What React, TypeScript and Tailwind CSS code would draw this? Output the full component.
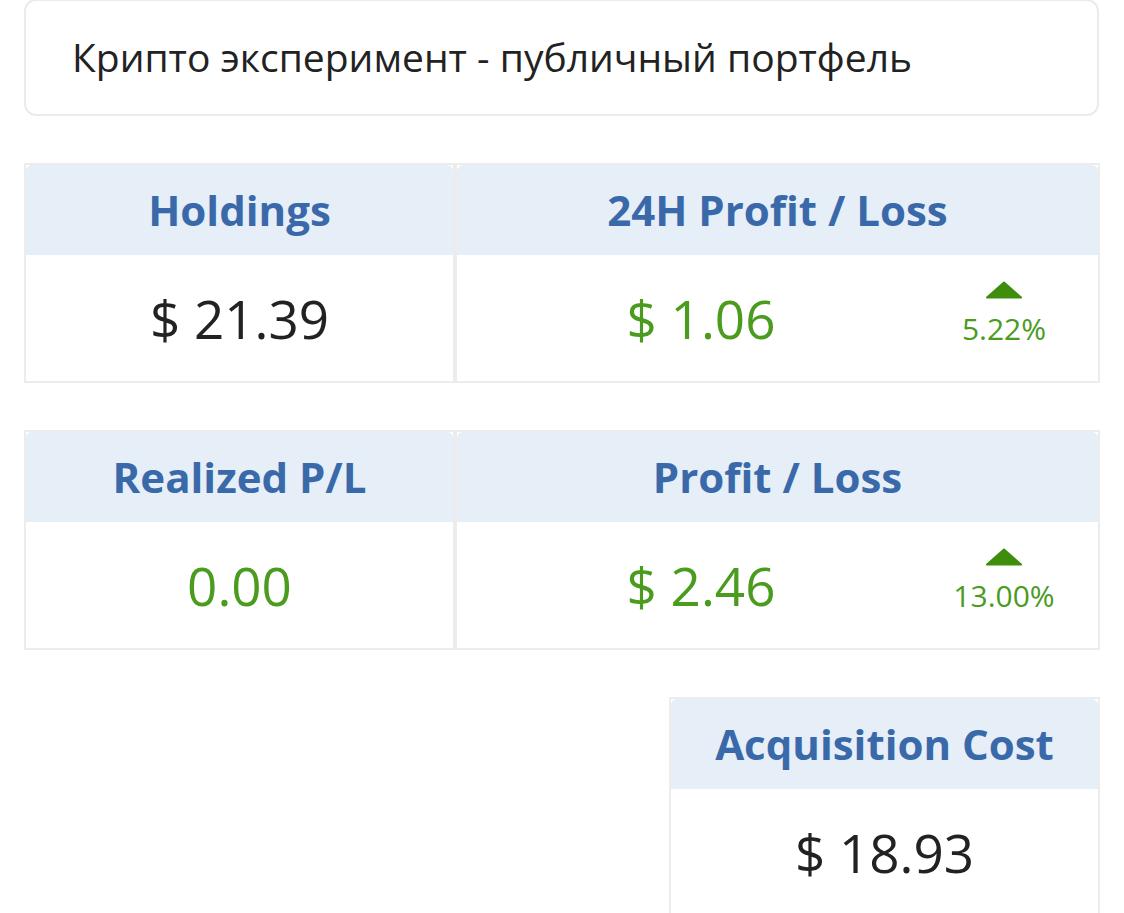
import React from 'react'

const font = { fontFamily: '"Open Sans", "Liberation Sans", sans-serif' }

function Header({ title }: { title: string }) {
  return (
    <div className="h-[90px] bg-[#e6eef7] rounded-t-[6px] flex items-center justify-center">
      <span className="text-[42px] font-bold text-[#3a69aa] leading-none">{title}</span>
    </div>
  )
}

function Triangle() {
  return (
    <svg width="38" height="18" viewBox="0 0 38 18" className="block">
      <path d="M19 1.5 L36 16.5 L2 16.5 Z" fill="#3e8e0c" stroke="#3e8e0c" strokeWidth="2" strokeLinejoin="round" />
    </svg>
  )
}

function PlainCell({ title, value, green }: { title: string; value: string; green?: boolean }) {
  return (
    <div className="w-[431px] shrink-0 border-2 border-[#ececec] bg-white">
      <Header title={title} />
      <div className="h-[126px] flex items-center justify-center">
        <span className={`text-[53px] leading-none ${green ? 'text-[#4a9b1e]' : 'text-[#222222]'}`}>{value}</span>
      </div>
    </div>
  )
}

function ChangeCell({ title, value, pct }: { title: string; value: string; pct: string }) {
  return (
    <div className="flex-1 border-2 border-[#ececec] bg-white">
      <Header title={title} />
      <div className="h-[126px] flex items-center">
        <div className="w-[488px] flex justify-center">
          <span className="text-[53px] leading-none text-[#4a9b1e]">{value}</span>
        </div>
        <div className="w-[118px] self-start mt-[26px] flex flex-col items-center">
          <Triangle />
          <span className="text-[30px] leading-none text-[#4a9b1e] mt-[15px]">{pct}</span>
        </div>
      </div>
    </div>
  )
}

export default function App() {
  return (
    <div className="w-[1124px] h-[913px] overflow-hidden bg-white px-[24px]" style={font}>
      {/* Название портфеля */}
      <div className="h-[117px] -mt-[1px] mr-[1px] border-2 border-[#ebebeb] rounded-[12px] flex items-center pl-[46px]">
        <span className="text-[39px] text-[#222222] leading-none pb-[2px]">Крипто эксперимент - публичный портфель</span>
      </div>

      <div className="flex mt-[47px]">
        <PlainCell title="Holdings" value="$ 21.39" />
        <ChangeCell title="24H Profit / Loss" value="$ 1.06" pct="5.22%" />
      </div>

      <div className="flex mt-[47px]">
        <PlainCell title="Realized P/L" value="0.00" green />
        <ChangeCell title="Profit / Loss" value="$ 2.46" pct="13.00%" />
      </div>

      <div className="flex justify-end mt-[47px]">
        <div className="w-[431px] border-2 border-[#ececec] bg-white">
          <Header title="Acquisition Cost" />
          <div className="h-[126px] flex items-center justify-center">
            <span className="text-[53px] leading-none text-[#222222]">$ 18.93</span>
          </div>
        </div>
      </div>
    </div>
  )
}
